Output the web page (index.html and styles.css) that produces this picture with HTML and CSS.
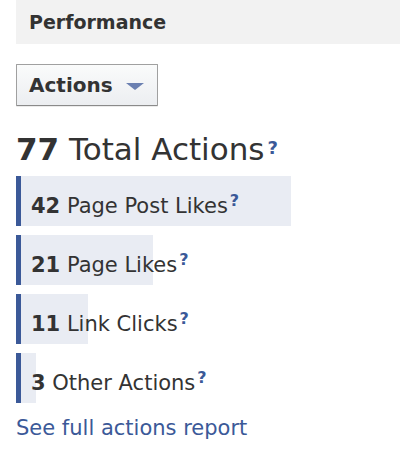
FILE: index.html
```html
<!DOCTYPE html>
<html lang="en">
<head>
  <meta charset="UTF-8">
  <title>Performance</title>
  <link rel="stylesheet" href="styles.css">
</head>
<body>
  <div class="panel-header">Performance</div>

  <button class="menu-btn" type="button">Actions <span class="caret"></span></button>

  <h2 class="total"><b>77</b> Total Actions<span class="help">?</span></h2>

  <div class="bars">
    <div class="bar" style="width: 275px;"><span class="bar-label"><b>42</b> Page Post Likes<span class="help">?</span></span></div>
    <div class="bar" style="width: 137px;"><span class="bar-label"><b>21</b> Page Likes<span class="help">?</span></span></div>
    <div class="bar" style="width: 72px;"><span class="bar-label"><b>11</b> Link Clicks<span class="help">?</span></span></div>
    <div class="bar" style="width: 20px;"><span class="bar-label"><b>3</b> Other Actions<span class="help">?</span></span></div>
  </div>

  <a class="report-link" href="#">See full actions report</a>
</body>
</html>
```

FILE: styles.css
```css
body {
  margin: 0;
  font-family: "DejaVu Sans", Verdana, sans-serif;
  color: #333;
  background: #fff;
}
.panel-header {
  margin-left: 16px;
  height: 44px;
  line-height: 44px;
  padding-left: 13px;
  background: #f2f2f2;
  font-size: 19px;
  font-weight: bold;
}
.menu-btn {
  display: flex;
  align-items: center;
  margin: 20px 0 0 16px;
  height: 42px;
  padding: 0 13px 0 12px;
  border: 1px solid #a0a0a0;
  border-bottom-color: #8a8a8a;
  border-radius: 1px;
  background: linear-gradient(#fafbfb, #eceef1);
  box-shadow: 0 1px 0 rgba(0, 0, 0, 0.08);
  font-family: inherit;
  font-size: 20px;
  font-weight: bold;
  color: #333;
}
.caret {
  width: 0;
  height: 0;
  margin-left: 13px;
  margin-top: 2px;
  border-left: 9px solid transparent;
  border-right: 9px solid transparent;
  border-top: 7px solid #6b80b1;
}
.total {
  margin: 24px 0 0 16px;
  font-size: 31px;
  line-height: 36px;
  font-weight: normal;
  color: #333;
}
.total .help {
  font-size: 18px;
  margin-left: 3px;
  vertical-align: 6px;
}
.help {
  font-weight: bold;
  color: #3b5998;
}
.bars {
  margin: 9px 0 0 16px;
  display: flex;
  flex-direction: column;
  gap: 9px;
}
.bar {
  box-sizing: border-box;
  height: 50px;
  border-left: 5px solid #3b5998;
  background: #e9ecf3;
  white-space: nowrap;
}
.bar-label {
  display: block;
  padding-left: 10px;
  font-size: 21px;
  line-height: 50px;
  color: #333;
}
.bar-label .help {
  font-size: 16px;
  margin-left: 2px;
  vertical-align: 7px;
}
.report-link {
  display: block;
  margin: 13px 0 0 16px;
  font-size: 21px;
  line-height: 24px;
  color: #3b5998;
  text-decoration: none;
}
```
